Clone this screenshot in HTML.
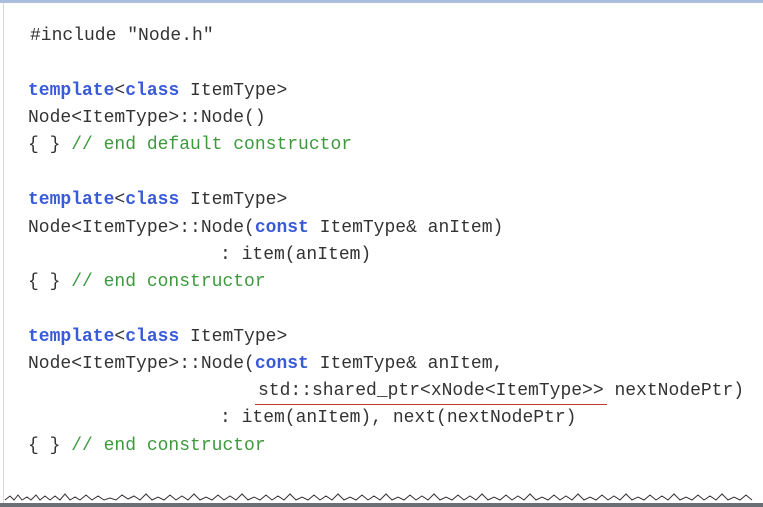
<!DOCTYPE html>
<html><head><style>
body{margin:0;width:763px;height:507px;background:#fff;position:relative;overflow:hidden}
.top{position:absolute;left:0;top:0;width:763px;height:3px;background:#a9bfdc}
.lb{position:absolute;left:3px;top:3px;width:1px;height:500px;background:#d8d8d8}
.bot{position:absolute;left:0;top:503px;width:763px;height:4px;background:#6a6f75}
.l{position:absolute;font-family:"Liberation Mono",monospace;font-size:18px;color:#333;white-space:pre;line-height:20px}
.k{color:#3a5bd9;font-weight:bold}
.c{color:#3c9a3c}
.u{position:absolute;left:255px;top:404px;width:352px;height:1px;background:#c0392b}
</style></head><body>
<div class="top"></div><div class="lb"></div>
<div class="l" style="left:30px;top:26px">#include "Node.h"</div>
<div class="l" style="left:28px;top:81px"><span class="k">template</span>&lt;<span class="k">class</span> ItemType&gt;</div>
<div class="l" style="left:28px;top:108px">Node&lt;ItemType&gt;::Node()</div>
<div class="l" style="left:28px;top:135px">{ } <span class="c">// end default constructor</span></div>
<div class="l" style="left:28px;top:190px"><span class="k">template</span>&lt;<span class="k">class</span> ItemType&gt;</div>
<div class="l" style="left:28px;top:218px">Node&lt;ItemType&gt;::Node(<span class="k">const</span> ItemType&amp; anItem)</div>
<div class="l" style="left:220px;top:245px">: item(anItem)</div>
<div class="l" style="left:28px;top:272px">{ } <span class="c">// end constructor</span></div>
<div class="l" style="left:28px;top:327px"><span class="k">template</span>&lt;<span class="k">class</span> ItemType&gt;</div>
<div class="l" style="left:28px;top:354px">Node&lt;ItemType&gt;::Node(<span class="k">const</span> ItemType&amp; anItem,</div>
<div class="l" style="left:258px;top:381px">std::shared_ptr&lt;xNode&lt;ItemType&gt;&gt; nextNodePtr)</div>
<div class="u"></div>
<div class="l" style="left:220px;top:408px">: item(anItem), next(nextNodePtr)</div>
<div class="l" style="left:28px;top:436px">{ } <span class="c">// end constructor</span></div>
<svg style="position:absolute;left:0;top:490px" width="763" height="13"><polyline fill="none" stroke="#333" stroke-width="1" points="5,10 10,6 14,10 18,5 22,10 27,7 31,10 36,5 40,10 45,6 50,10 55,6 60,10 65,4 70,10 75,7 80,10 86,5 92,10 98,6 104,10 110,8 116,10 122,5 128,9 134,6 140,10 146,4 152,10 158,7 164,10 170,5 176,10 182,6 188,10 194,4 200,10 206,7 212,10 218,5 224,10 230,6 236,10 242,4 248,10 254,7 260,10 266,5 272,10 278,6 284,10 290,4 296,10 302,7 308,10 314,5 320,10 326,6 332,10 338,4 344,10 350,7 356,10 362,5 368,10 374,6 380,10 386,4 392,10 398,7 404,10 410,5 416,10 422,6 428,10 434,4 440,10 446,7 452,10 458,5 464,10 470,6 476,10 482,4 488,10 494,7 500,10 506,5 512,10 518,6 524,10 530,4 536,10 542,7 548,10 554,5 560,10 566,6 572,10 578,4 584,10 590,7 596,10 602,5 608,10 614,6 620,10 626,4 632,10 638,7 644,10 650,5 656,10 662,6 668,10 674,4 680,10 686,7 692,10 698,5 704,10 710,6 716,10 722,4 728,10 734,7 740,10 746,5 752,10"/></svg>
<div class="bot"></div>
</body></html>
